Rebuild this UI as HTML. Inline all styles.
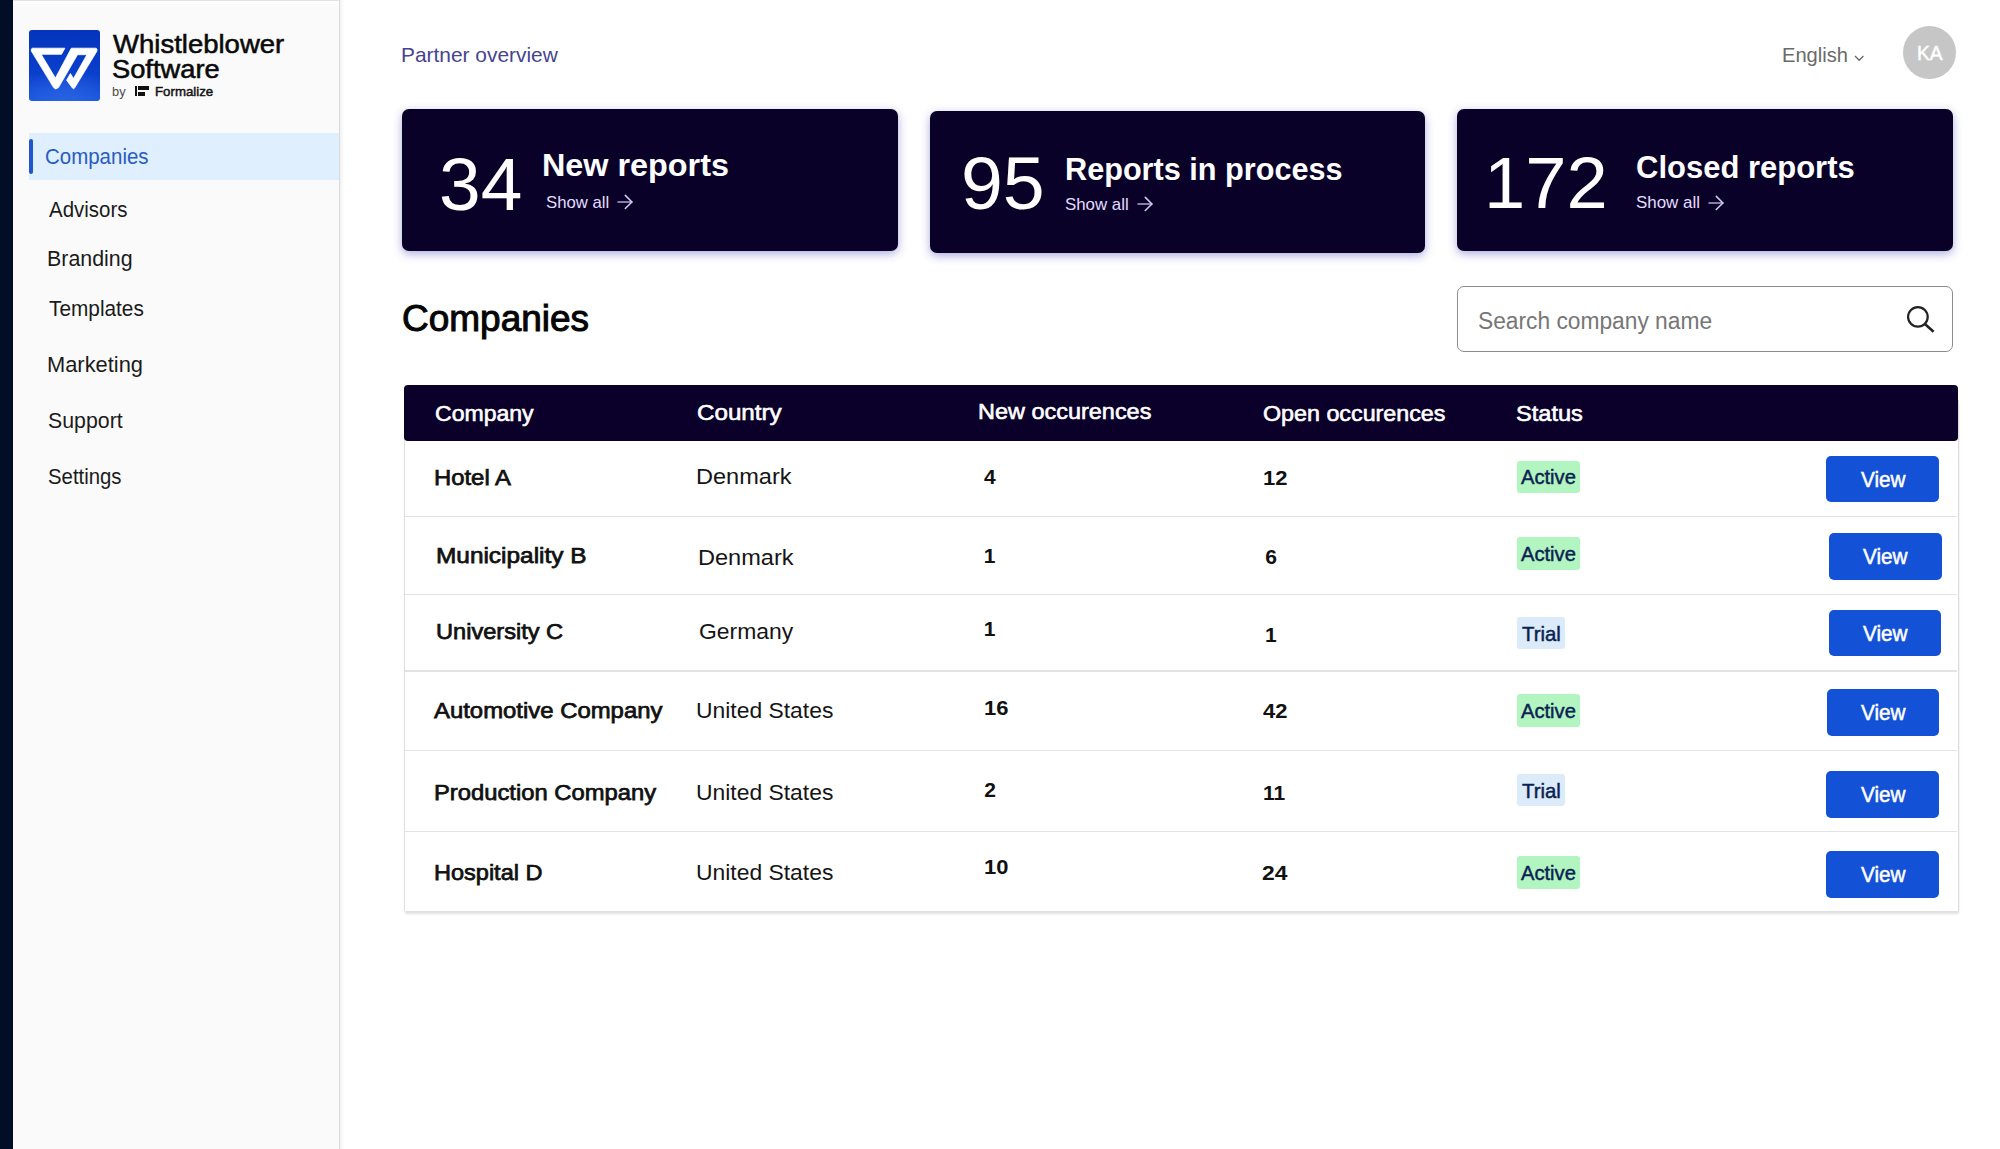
<!DOCTYPE html>
<html><head><meta charset="utf-8"><title>Partner overview</title>
<style>
html,body{margin:0;padding:0;}
body{width:2000px;height:1149px;overflow:hidden;position:relative;background:#fff;font-family:"Liberation Sans",sans-serif;}
.r{position:absolute;}
.t{position:absolute;white-space:nowrap;transform-origin:0 0;}
</style></head><body>
<div class="r" style="left:0px;top:0px;width:12.50px;height:1149.00px;background:#020d28;"></div>
<div class="r" style="left:12.5px;top:0px;width:326.50px;height:1149.00px;background:#fafafa;"></div>
<div class="r" style="left:12.5px;top:0px;width:326.50px;height:1.00px;background:#e2e2e2;"></div>
<div class="r" style="left:12.5px;top:1px;width:326.50px;height:3.00px;background:#ffffff;"></div>
<div class="r" style="left:339px;top:0px;width:1.00px;height:1149.00px;background:#dcdcdc;"></div>
<div class="r" style="left:340px;top:0px;width:4.00px;height:1149.00px;background:linear-gradient(90deg,rgba(0,0,0,0.06),rgba(0,0,0,0));"></div>
<div class="r" style="left:29px;top:132.8px;width:310.00px;height:46.80px;background:#dfeffd;"></div>
<div class="r" style="left:29px;top:139px;width:4.00px;height:35.00px;background:#1f55d0;border-radius:2px;"></div>
<div class="r" style="left:29px;top:30px;width:71.00px;height:71.00px;border-radius:3px;background:radial-gradient(ellipse 70% 45% at 50% 100%, #2863e3 0%, rgba(40,99,227,0) 100%), linear-gradient(180deg,#0434bd 0%,#0a3fcc 60%,#1c56dc 100%);"></div>
<svg class="r" style="left:29px;top:30px" width="71" height="71" viewBox="0 0 71 71"><path fill="#fff" stroke="#fff" stroke-width="0.8" stroke-linejoin="round" d="M3.2 18.2 L35.9 18.2 L32.5 24.3 L12.2 24.3 L26.4 48.1 L42.3 18.2 L67.0 18.2 Q68.6 18.6 67.9 21.2 L45.6 58.0 Q44.5 59.6 43.4 58.0 L37.6 50.2 L41.4 43.6 L44.5 48.6 L57.9 24.7 L48.5 24.7 L29.5 57.6 Q26.3 60.2 24.6 57.6 L2.3 21.0 Q1.8 18.6 3.2 18.2 Z"/></svg>
<div class="r" style="left:135px;top:86.3px;width:2.00px;height:9.40px;background:#111;"></div>
<div class="r" style="left:138px;top:86.3px;width:11.20px;height:4.20px;background:#111;"></div>
<div class="r" style="left:138px;top:91.5px;width:7.40px;height:4.20px;background:#111;"></div>
<div class="r" style="left:1903px;top:26px;width:53.00px;height:53.00px;background:#c6c6c6;border-radius:50%;"></div>
<svg class="r" style="left:1850px;top:50px" width="20" height="15"><polyline points="5,6 9.2,10.3 13.4,6" fill="none" stroke="#666" stroke-width="1.3"/></svg>
<div class="r" style="left:402px;top:109.4px;width:496.00px;height:141.90px;background:#0a0129;border-radius:7px;box-shadow:0 3px 10px rgba(60,60,180,0.42);"></div>
<div class="r" style="left:929.5px;top:111.2px;width:495.70px;height:141.60px;background:#0a0129;border-radius:7px;box-shadow:0 3px 10px rgba(60,60,180,0.42);"></div>
<div class="r" style="left:1457.2px;top:109.4px;width:495.80px;height:141.90px;background:#0a0129;border-radius:7px;box-shadow:0 3px 10px rgba(60,60,180,0.42);"></div>
<svg class="r" style="left:616px;top:193px" width="20" height="18"><g fill="none" stroke="#d4ccf2" stroke-width="1.5" stroke-linecap="round"><line x1="2" y1="9" x2="15.9" y2="9" stroke="#b0a6d6"/><polyline points="9.3,2.4 15.9,9 9.3,15.5"/></g></svg>
<svg class="r" style="left:1135.5px;top:195px" width="20" height="18"><g fill="none" stroke="#d4ccf2" stroke-width="1.5" stroke-linecap="round"><line x1="2" y1="9" x2="15.9" y2="9" stroke="#b0a6d6"/><polyline points="9.3,2.4 15.9,9 9.3,15.5"/></g></svg>
<svg class="r" style="left:1706.5px;top:193.5px" width="20" height="18"><g fill="none" stroke="#d4ccf2" stroke-width="1.5" stroke-linecap="round"><line x1="2" y1="9" x2="15.9" y2="9" stroke="#b0a6d6"/><polyline points="9.3,2.4 15.9,9 9.3,15.5"/></g></svg>
<div class="r" style="left:1457px;top:286.2px;width:496.00px;height:66.20px;box-sizing:border-box;border:1.5px solid #8c8c8c;border-radius:7px;background:#fff;"></div>
<svg class="r" style="left:1900px;top:298px" width="40" height="40"><circle cx="17.9" cy="18.9" r="9.8" fill="none" stroke="#222" stroke-width="2.2"/><line x1="25.2" y1="26.2" x2="33.6" y2="33.8" stroke="#222" stroke-width="2.6"/></svg>
<div class="r" style="left:403.5px;top:400px;width:1555.50px;height:511.00px;background:#fff;box-sizing:border-box;border-left:1px solid #dedede;border-right:1px solid #dcdcdc;box-shadow:0 3px 2px -0.5px rgba(0,0,0,0.12);"></div>
<div class="r" style="left:403.7px;top:384.5px;width:1554.50px;height:56.00px;background:#0a0029;border-radius:4px;"></div>
<div class="r" style="left:404.5px;top:515.55px;width:1552.50px;height:1.50px;background:#e3e3e3;"></div>
<div class="r" style="left:404.5px;top:593.75px;width:1552.50px;height:1.50px;background:#e3e3e3;"></div>
<div class="r" style="left:404.5px;top:670.05px;width:1552.50px;height:1.50px;background:#e3e3e3;"></div>
<div class="r" style="left:404.5px;top:749.75px;width:1552.50px;height:1.50px;background:#e3e3e3;"></div>
<div class="r" style="left:404.5px;top:830.65px;width:1552.50px;height:1.50px;background:#e3e3e3;"></div>
<div class="r" style="left:1516.8px;top:460.6px;width:63.20px;height:32.70px;background:#b3f5c0;border-radius:3px;"></div>
<div class="r" style="left:1516.8px;top:537.4px;width:63.20px;height:32.90px;background:#b3f5c0;border-radius:3px;"></div>
<div class="r" style="left:1516.8px;top:616.7px;width:48.40px;height:32.60px;background:#dcebfa;border-radius:3px;"></div>
<div class="r" style="left:1516.8px;top:694.4px;width:63.20px;height:32.60px;background:#b3f5c0;border-radius:3px;"></div>
<div class="r" style="left:1516.8px;top:773.9px;width:48.40px;height:32.50px;background:#dcebfa;border-radius:3px;"></div>
<div class="r" style="left:1516.8px;top:856.2px;width:63.20px;height:32.60px;background:#b3f5c0;border-radius:3px;"></div>
<div class="r" style="left:1826.2px;top:455.5px;width:112.70px;height:46.60px;background:#1351d6;border-radius:5px;"></div>
<div class="r" style="left:1828.9px;top:533.4px;width:112.70px;height:46.60px;background:#1351d6;border-radius:5px;"></div>
<div class="r" style="left:1828.6px;top:609.8px;width:112.70px;height:46.60px;background:#1351d6;border-radius:5px;"></div>
<div class="r" style="left:1826.5px;top:689px;width:112.70px;height:46.60px;background:#1351d6;border-radius:5px;"></div>
<div class="r" style="left:1826.4px;top:771.1px;width:112.70px;height:46.60px;background:#1351d6;border-radius:5px;"></div>
<div class="r" style="left:1826.4px;top:851.2px;width:112.70px;height:46.60px;background:#1351d6;border-radius:5px;"></div>
<div class="t" style="left:112.60px;top:30.92px;font-size:26.087px;line-height:26.087px;color:#0a0a0a;-webkit-text-stroke:0.55px #0a0a0a;transform:scaleX(1.0549);">Whistleblower</div>
<div class="t" style="left:111.53px;top:57.11px;font-size:25.507px;line-height:25.507px;color:#0a0a0a;-webkit-text-stroke:0.55px #0a0a0a;transform:scaleX(1.0697);">Software</div>
<div class="t" style="left:111.97px;top:86.19px;font-size:12.414px;line-height:12.414px;color:#4a4a4a;transform:scaleX(1.0333);">by</div>
<div class="t" style="left:154.78px;top:84.66px;font-size:13.043px;line-height:13.043px;color:#111111;-webkit-text-stroke:0.45px #111111;transform:scaleX(1.0179);">Formalize</div>
<div class="t" style="left:44.54px;top:146.77px;font-size:21.304px;line-height:21.304px;color:#2a5cc4;transform:scaleX(0.9613);">Companies</div>
<div class="t" style="left:48.50px;top:199.49px;font-size:21.159px;line-height:21.159px;color:#1b1b1b;transform:scaleX(0.9675);">Advisors</div>
<div class="t" style="left:47.48px;top:248.19px;font-size:21.159px;line-height:21.159px;color:#1b1b1b;transform:scaleX(1.0111);">Branding</div>
<div class="t" style="left:48.50px;top:297.59px;font-size:21.159px;line-height:21.159px;color:#1b1b1b;transform:scaleX(0.9844);">Templates</div>
<div class="t" style="left:46.93px;top:353.89px;font-size:21.159px;line-height:21.159px;color:#1b1b1b;transform:scaleX(1.0337);">Marketing</div>
<div class="t" style="left:47.59px;top:409.79px;font-size:21.159px;line-height:21.159px;color:#1b1b1b;transform:scaleX(1.0082);">Support</div>
<div class="t" style="left:47.64px;top:465.59px;font-size:21.159px;line-height:21.159px;color:#1b1b1b;transform:scaleX(0.9627);">Settings</div>
<div class="t" style="left:400.84px;top:44.82px;font-size:20.290px;line-height:20.290px;color:#46448f;transform:scaleX(1.0307);">Partner overview</div>
<div class="t" style="left:1781.52px;top:45.32px;font-size:20.290px;line-height:20.290px;color:#6a6a6a;transform:scaleX(0.9921);">English</div>
<div class="t" style="left:1916.52px;top:44.44px;font-size:19.565px;line-height:19.565px;color:#ffffff;-webkit-text-stroke:0.5px #ffffff;transform:scaleX(0.9800);">KA</div>
<div class="t" style="left:438.98px;top:147.72px;font-size:74.286px;line-height:74.286px;color:#ffffff;transform:scaleX(1.0078);">34</div>
<div class="t" style="left:542.33px;top:149.50px;font-size:31.304px;line-height:31.304px;color:#ffffff;font-weight:bold;transform:scaleX(1.0337);">New reports</div>
<div class="t" style="left:545.84px;top:194.28px;font-size:17.391px;line-height:17.391px;color:#e4ddff;transform:scaleX(0.9625);">Show all</div>
<div class="t" style="left:960.95px;top:147.12px;font-size:74.286px;line-height:74.286px;color:#ffffff;transform:scaleX(1.0133);">95</div>
<div class="t" style="left:1064.99px;top:154.24px;font-size:30.435px;line-height:30.435px;color:#ffffff;font-weight:bold;transform:scaleX(1.0074);">Reports in process</div>
<div class="t" style="left:1065.03px;top:196.28px;font-size:17.391px;line-height:17.391px;color:#e4ddff;transform:scaleX(0.9688);">Show all</div>
<div class="t" style="left:1483.89px;top:147.33px;font-size:72.857px;line-height:72.857px;color:#ffffff;transform:scaleX(1.0179);">172</div>
<div class="t" style="left:1635.98px;top:152.24px;font-size:30.435px;line-height:30.435px;color:#ffffff;font-weight:bold;transform:scaleX(1.0189);">Closed reports</div>
<div class="t" style="left:1635.98px;top:194.89px;font-size:16.667px;line-height:16.667px;color:#e4ddff;transform:scaleX(1.0164);">Show all</div>
<div class="t" style="left:402.39px;top:300.58px;font-size:36.522px;line-height:36.522px;color:#050505;-webkit-text-stroke:1.0px #050505;transform:scaleX(1.0131);">Companies</div>
<div class="t" style="left:1477.62px;top:310.27px;font-size:23.188px;line-height:23.188px;color:#767676;transform:scaleX(0.9822);">Search company name</div>
<div class="t" style="left:434.55px;top:403.35px;font-size:22.029px;line-height:22.029px;color:#ffffff;-webkit-text-stroke:0.6px #ffffff;transform:scaleX(1.0468);">Company</div>
<div class="t" style="left:696.50px;top:402.35px;font-size:22.029px;line-height:22.029px;color:#ffffff;-webkit-text-stroke:0.6px #ffffff;transform:scaleX(1.0974);">Country</div>
<div class="t" style="left:978.30px;top:400.81px;font-size:22.319px;line-height:22.319px;color:#ffffff;-webkit-text-stroke:0.6px #ffffff;transform:scaleX(1.0519);">New occurences</div>
<div class="t" style="left:1262.66px;top:403.41px;font-size:22.319px;line-height:22.319px;color:#ffffff;-webkit-text-stroke:0.6px #ffffff;transform:scaleX(1.0439);">Open occurences</div>
<div class="t" style="left:1515.84px;top:403.41px;font-size:22.319px;line-height:22.319px;color:#ffffff;-webkit-text-stroke:0.6px #ffffff;transform:scaleX(1.0581);">Status</div>
<div class="t" style="left:433.94px;top:467.46px;font-size:22.609px;line-height:22.609px;color:#111111;-webkit-text-stroke:0.75px #111111;transform:scaleX(1.0556);">Hotel A</div>
<div class="t" style="left:695.89px;top:465.51px;font-size:22.319px;line-height:22.319px;color:#151515;transform:scaleX(1.0568);">Denmark</div>
<div class="t" style="left:983.95px;top:466.12px;font-size:21.000px;line-height:21.000px;color:#111111;font-weight:bold;">4</div>
<div class="t" style="left:1262.75px;top:467.12px;font-size:21.000px;line-height:21.000px;color:#111111;font-weight:bold;transform:scaleX(1.0455);">12</div>
<div class="t" style="left:1521.00px;top:467.96px;font-size:19.420px;line-height:19.420px;color:#0b1f52;-webkit-text-stroke:0.45px #0b1f52;transform:scaleX(1.0385);">Active</div>
<div class="t" style="left:1860.60px;top:469.64px;font-size:21.449px;line-height:21.449px;color:#ffffff;-webkit-text-stroke:0.5px #ffffff;transform:scaleX(0.9674);">View</div>
<div class="t" style="left:435.92px;top:545.46px;font-size:22.609px;line-height:22.609px;color:#111111;-webkit-text-stroke:0.75px #111111;transform:scaleX(1.0797);">Municipality B</div>
<div class="t" style="left:697.89px;top:547.11px;font-size:22.319px;line-height:22.319px;color:#151515;transform:scaleX(1.0568);">Denmark</div>
<div class="t" style="left:983.75px;top:545.42px;font-size:21.000px;line-height:21.000px;color:#111111;font-weight:bold;">1</div>
<div class="t" style="left:1265.15px;top:546.42px;font-size:21.000px;line-height:21.000px;color:#111111;font-weight:bold;">6</div>
<div class="t" style="left:1521.00px;top:544.56px;font-size:19.420px;line-height:19.420px;color:#0b1f52;-webkit-text-stroke:0.45px #0b1f52;transform:scaleX(1.0385);">Active</div>
<div class="t" style="left:1862.60px;top:547.24px;font-size:21.449px;line-height:21.449px;color:#ffffff;-webkit-text-stroke:0.5px #ffffff;transform:scaleX(0.9674);">View</div>
<div class="t" style="left:435.96px;top:620.56px;font-size:22.609px;line-height:22.609px;color:#111111;-webkit-text-stroke:0.75px #111111;transform:scaleX(1.0442);">University C</div>
<div class="t" style="left:698.77px;top:621.31px;font-size:22.319px;line-height:22.319px;color:#151515;transform:scaleX(1.0275);">Germany</div>
<div class="t" style="left:983.75px;top:617.52px;font-size:21.000px;line-height:21.000px;color:#111111;font-weight:bold;">1</div>
<div class="t" style="left:1265.00px;top:623.72px;font-size:21.000px;line-height:21.000px;color:#111111;font-weight:bold;">1</div>
<div class="t" style="left:1521.60px;top:624.56px;font-size:19.420px;line-height:19.420px;color:#0b1f52;-webkit-text-stroke:0.45px #0b1f52;transform:scaleX(1.0500);">Trial</div>
<div class="t" style="left:1862.60px;top:623.74px;font-size:21.449px;line-height:21.449px;color:#ffffff;-webkit-text-stroke:0.5px #ffffff;transform:scaleX(0.9674);">View</div>
<div class="t" style="left:434.40px;top:699.66px;font-size:22.609px;line-height:22.609px;color:#111111;-webkit-text-stroke:0.75px #111111;transform:scaleX(1.0574);">Automotive Company</div>
<div class="t" style="left:695.95px;top:700.11px;font-size:22.319px;line-height:22.319px;color:#151515;transform:scaleX(1.0260);">United States</div>
<div class="t" style="left:983.95px;top:697.22px;font-size:21.000px;line-height:21.000px;color:#111111;font-weight:bold;transform:scaleX(1.0455);">16</div>
<div class="t" style="left:1263.00px;top:699.62px;font-size:21.000px;line-height:21.000px;color:#111111;font-weight:bold;transform:scaleX(1.0435);">42</div>
<div class="t" style="left:1521.00px;top:701.86px;font-size:19.420px;line-height:19.420px;color:#0b1f52;-webkit-text-stroke:0.45px #0b1f52;transform:scaleX(1.0385);">Active</div>
<div class="t" style="left:1860.80px;top:702.64px;font-size:21.449px;line-height:21.449px;color:#ffffff;-webkit-text-stroke:0.5px #ffffff;transform:scaleX(0.9674);">View</div>
<div class="t" style="left:434.05px;top:781.86px;font-size:22.609px;line-height:22.609px;color:#111111;-webkit-text-stroke:0.75px #111111;transform:scaleX(1.0529);">Production Company</div>
<div class="t" style="left:695.95px;top:781.81px;font-size:22.319px;line-height:22.319px;color:#151515;transform:scaleX(1.0260);">United States</div>
<div class="t" style="left:984.20px;top:779.22px;font-size:21.000px;line-height:21.000px;color:#111111;font-weight:bold;">2</div>
<div class="t" style="left:1263.00px;top:781.82px;font-size:21.000px;line-height:21.000px;color:#111111;font-weight:bold;">11</div>
<div class="t" style="left:1521.60px;top:782.36px;font-size:19.420px;line-height:19.420px;color:#0b1f52;-webkit-text-stroke:0.45px #0b1f52;transform:scaleX(1.0500);">Trial</div>
<div class="t" style="left:1860.80px;top:784.94px;font-size:21.449px;line-height:21.449px;color:#ffffff;-webkit-text-stroke:0.5px #ffffff;transform:scaleX(0.9674);">View</div>
<div class="t" style="left:433.96px;top:862.46px;font-size:22.609px;line-height:22.609px;color:#111111;-webkit-text-stroke:0.75px #111111;transform:scaleX(1.0408);">Hospital D</div>
<div class="t" style="left:695.95px;top:861.91px;font-size:22.319px;line-height:22.319px;color:#151515;transform:scaleX(1.0260);">United States</div>
<div class="t" style="left:983.95px;top:855.62px;font-size:21.000px;line-height:21.000px;color:#111111;font-weight:bold;transform:scaleX(1.0455);">10</div>
<div class="t" style="left:1261.91px;top:862.22px;font-size:21.000px;line-height:21.000px;color:#111111;font-weight:bold;transform:scaleX(1.0909);">24</div>
<div class="t" style="left:1521.00px;top:863.76px;font-size:19.420px;line-height:19.420px;color:#0b1f52;-webkit-text-stroke:0.45px #0b1f52;transform:scaleX(1.0385);">Active</div>
<div class="t" style="left:1860.80px;top:864.84px;font-size:21.449px;line-height:21.449px;color:#ffffff;-webkit-text-stroke:0.5px #ffffff;transform:scaleX(0.9674);">View</div>
</body></html>
